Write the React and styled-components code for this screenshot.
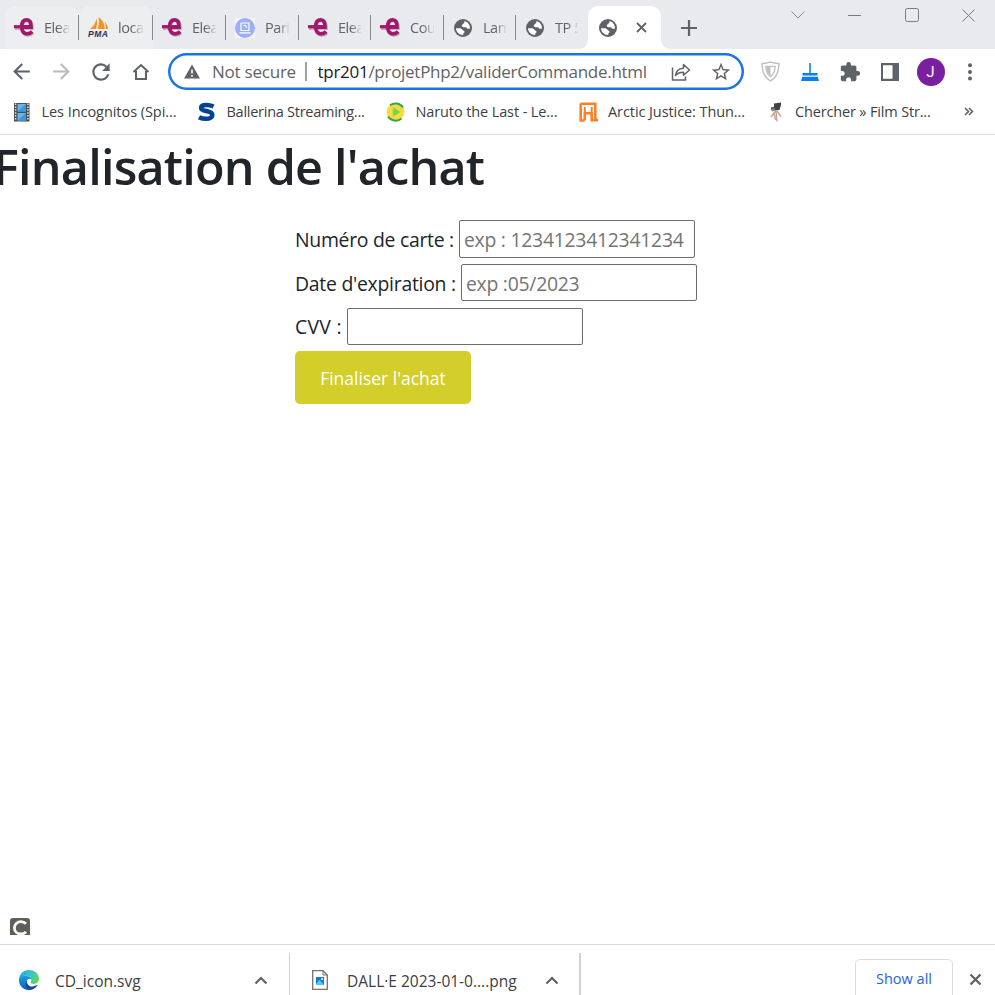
import React from "react";
import styled, { createGlobalStyle } from "styled-components";
import { MdExtension, MdStarOutline, MdRefresh, MdArrowBack, MdArrowForward } from "react-icons/md";

const GlobalStyle = createGlobalStyle`
  *, *::before, *::after { box-sizing: border-box; }
  html, body { margin: 0; padding: 0; height: 100%; overflow: hidden; }
  body { background: #fff; font-family: "Open Sans", "Noto Sans", sans-serif; }
  svg { display: block; flex: none; }
`;

const Window = styled.div`
  width: 995px;
  height: 995px;
  display: flex;
  flex-direction: column;
  overflow: hidden;
`;

/* ---------- tab strip ---------- */
const TabStrip = styled.div`
  height: 49px;
  flex: none;
  display: flex;
  background: #e8eaed;
  padding: 6px 0 0 5px;
`;
const Tab = styled.div`
  width: ${(p) => p.$width}px;
  height: 43px;
  flex: none;
  display: flex;
  align-items: center;
  padding-left: 9px;
  border-radius: 10px 10px 0 0;
  background: ${(p) => (p.$tint ? "#eceef0" : "transparent")};
`;
const TabIcon = styled.span`
  width: 21px;
  flex: none;
`;
const TabTitle = styled.span`
  flex: 1;
  min-width: 0;
  margin-left: 9px;
  white-space: nowrap;
  font-size: 14.5px;
  letter-spacing: -0.45px;
  line-height: 22px;
  color: #5f6368;
  mask-image: linear-gradient(to right, #000 55%, transparent 105%);
`;
const TabDivider = styled.span`
  width: 1px;
  height: 25px;
  margin-left: 9px;
  background: ${(p) => (p.$hidden ? "transparent" : "#85888c")};
`;
const ActiveTab = styled.div`
  position: relative;
  width: 73px;
  height: 43px;
  flex: none;
  display: flex;
  align-items: center;
  padding-left: 10px;
  gap: 18px;
  background: #fff;
  border-radius: 10px 10px 0 0;
  &::before, &::after {
    content: "";
    position: absolute;
    bottom: 0;
    width: 9px;
    height: 9px;
  }
  &::before { left: -9px; background: radial-gradient(circle at 0 0, transparent 8.5px, #fff 9px); }
  &::after { right: -9px; background: radial-gradient(circle at 100% 0, transparent 8.5px, #fff 9px); }
`;
const NewTab = styled.div`
  display: flex;
  align-items: center;
  height: 43px;
  margin-left: 20px;
`;
const WindowControls = styled.div`
  display: flex;
  margin: 0 -2px 0 auto;
  height: 18px;
`;
const WindowControl = styled.div`
  width: 57px;
  display: flex;
  align-items: center;
  justify-content: center;
`;

/* ---------- toolbar ---------- */
const Toolbar = styled.div`
  height: 46px;
  flex: none;
  display: flex;
  align-items: center;
  padding: 0 0 1px 1px;
`;
const ToolButton = styled.div`
  width: 40px;
  height: 40px;
  flex: none;
  display: flex;
  align-items: center;
  justify-content: center;
  color: ${(p) => (p.$disabled ? "#babcbe" : "#5f6368")};
`;
const AddressBar = styled.div`
  width: 576px;
  height: 37px;
  flex: none;
  margin: 0 6px 0 7px;
  display: flex;
  align-items: center;
  box-shadow: inset 0 0 0 2.5px #1a73e8;
  border-radius: 19px;
  padding-left: 16px;
  font-size: 17px;
  line-height: 24px;
  white-space: nowrap;
  color: #5f6368;
`;
const Security = styled.span`
  width: 84px;
  margin-left: 12px;
  letter-spacing: -0.23px;
`;
const AddressDivider = styled.span`
  width: 1.5px;
  height: 19px;
  margin: 0 11px 0 9px;
  background: #9aa0a6;
`;
const Url = styled.span`
  width: 343px;
  letter-spacing: -0.28px;
`;
const Host = styled.span`
  color: #202124;
`;
const Avatar = styled.div`
  width: 28px;
  height: 28px;
  margin-left: 1px;
  border-radius: 50%;
  background: #7b1fa2;
  color: #fff;
  display: flex;
  align-items: center;
  justify-content: center;
  font: 15px/28px Roboto, sans-serif;
`;

/* ---------- bookmarks ---------- */
const Bookmarks = styled.div`
  height: 40px;
  flex: none;
  display: flex;
  align-items: center;
  padding: 0 0 6px 12px;
  border-bottom: 1px solid #dadce0;
`;
const Bookmark = styled.div`
  width: ${(p) => p.$width}px;
  flex: none;
  display: flex;
  align-items: center;
  gap: 9.5px;
  font-size: 14.5px;
  line-height: 22px;
  letter-spacing: ${(p) => p.$tracking}px;
  white-space: nowrap;
  color: #3c4043;
`;

/* ---------- page ---------- */
const Page = styled.main`
  flex: 1;
  display: flex;
  flex-direction: column;
  overflow: hidden;
  color: #212529;
`;
const Heading = styled.h1`
  margin: 1px 0 0 -7px;
  font-size: 48.5px;
  font-weight: 600;
  line-height: 60px;
  letter-spacing: -0.78px;
  white-space: nowrap;
`;
const Form = styled.form`
  margin: 24px 0 0 295px;
  display: flex;
  flex-direction: column;
  align-items: flex-start;
`;
const Field = styled.label`
  display: flex;
  align-items: flex-start;
  height: 44px;
  font-size: 19.4px;
  line-height: 40px;
  white-space: nowrap;
`;
const FieldLabel = styled.span`
  width: ${(p) => p.$width}px;
  line-height: ${(p) => p.$line || 40}px;
  letter-spacing: ${(p) => p.$tracking}px;
`;
const Input = styled.input`
  width: 236px;
  height: ${(p) => p.$height || 37}px;
  padding: ${(p) => (p.$height ? 1 : 3)}px 4px 1px;
  border: 1px solid #6d6d6d;
  border-radius: 2px;
  outline: none;
  background: #fff;
  font: 19.4px/30px "Open Sans", "Noto Sans", sans-serif;
  letter-spacing: -0.27px;
  &::placeholder { color: #757575; opacity: 1; }
`;
const Submit = styled.button`
  width: 176px;
  height: 53px;
  margin-top: -1px;
  padding: 2px 0 0;
  border: 0;
  border-radius: 5px;
  background: #d3ce2a;
  color: #fff;
  font: 17.5px/27px "Open Sans", "Noto Sans", sans-serif;
  white-space: nowrap;
`;
const CornerBadge = styled.div`
  margin: auto 0 9px 10px;
`;

/* ---------- downloads ---------- */
const Downloads = styled.footer`
  height: 51px;
  flex: none;
  display: flex;
  border-top: 1px solid #dadce0;
  padding-top: 8px;
`;
const Download = styled.div`
  width: ${(p) => p.$width}px;
  height: 42px;
  flex: none;
  display: flex;
  align-items: center;
  padding: 11px ${(p) => p.$end}px 0 ${(p) => p.$inset}px;
  border-right: ${(p) => p.$edge}px solid #cfd0d2;
  color: #3c4043;
`;
const FileName = styled.span`
  flex: 1;
  padding-top: 2px;
  margin-left: ${(p) => p.$gap}px;
  font-size: 15.5px;
  line-height: 22px;
  white-space: nowrap;
`;
const ShowAll = styled.div`
  width: 98px;
  height: 42px;
  margin: 6px 0 0 auto;
  border: 1px solid #dadce0;
  border-radius: 5px;
  color: #1a66e0;
  font-size: 14.5px;
  font-weight: 500;
  line-height: 38px;
  text-align: center;
`;
const CloseDownloads = styled.div`
  width: 42px;
  padding: 20px 0 0 16px;
`;

/* ---------- icons ---------- */
const Stroke = ({ w, h = w, d, color = "#5f6368", sw = 2 }) => (
  <svg width={w} height={h} viewBox={`0 0 ${w} ${h}`} fill="none" stroke={color} strokeWidth={sw}>
    <path d={d} />
  </svg>
);
const ElearningIcon = () => (
  <svg width="21" height="21" viewBox="0 0 21 21" fill="none">
    <path d="M1 11H18C18 6 16.500 3.400 13.400 3.400C9.900 3.400 8 6.300 8 10.300C8 14.800 10.300 17.800 13.600 17.800C15.800 17.800 17.600 17 18.800 15.800" stroke="#777" strokeOpacity=".45" strokeWidth="3.800" />
    <path d="M0 9.700H7" stroke="#a3176d" strokeWidth="3.200" />
    <path d="M6 10H17C17 5 15.500 2.800 12.700 2.800C9.400 2.800 7.700 5.500 7.700 9.700C7.700 14 9.700 16.800 13 16.800C15 16.800 16.800 16 18.200 14.600" stroke="#a3176d" strokeWidth="3.800" />
  </svg>
);
const PmaIcon = () => (
  <svg width="21" height="21" viewBox="0 0 21 21">
    <path d="M2 12C6 9 7.500 6 8.500 1.500C9.500 5 9 9 8 12ZM9.500 12C11.500 7 11 4 10.500 0C15 3 17 8 16.500 12ZM17.500 12C17.800 9 17.500 7 16.500 4.500C19 7 20 10 20 12Z" fill="#f7931e" />
    <text x="0" y="19.500" textLength="20" fill="#2c2b63" fontFamily="Liberation Sans" fontSize="8.500" fontWeight="700" fontStyle="italic">PMA</text>
  </svg>
);
const PartIcon = () => (
  <svg width="20" height="20" viewBox="0 0 20 20">
    <path fill="#f6f8ff" d="M0 0h20v20H0z" />
    <circle cx="10" cy="10" r="10" fill="#9caefa" />
    <path d="M6 5h8v7.500H6zM4.500 14.800h11" fill="none" stroke="#fff" strokeWidth="1.200" />
    <path d="M8.500 7.500h2.500v2h1" fill="none" stroke="#fff" />
  </svg>
);
const Globe = () => (
  <svg width="20" height="18" viewBox="0 0 20 18">
    <circle cx="10" cy="9" r="9" fill="#5f6368" />
    <g fill="#fff">
      <path d="M11.500 2.100C14.800 3 17 5.800 17 9.300C15.800 10.400 13.600 9.800 13.300 8.300C11.300 8.300 8.900 8.700 8.900 6.600C8.900 5 11.800 5 11.500 2.100Z" />
      <path d="M3 9.300H7.300C9 9.500 9 11.200 10.600 11.700C12 12.300 11.800 13.700 10.300 14.300V16C6.200 16 3 13 3 9.300Z" />
    </g>
  </svg>
);
const HomeIcon = () => <Stroke w={18} h={18} sw={2} d="M1.500 9L9 2L16.500 9M4 8V16H14V8" />;
const WarningIcon = () => (
  <svg width="16" height="15" viewBox="0 0 16 15">
    <path d="M8 .5L16 14.500H0Z" fill="#5f6368" />
    <path d="M8 5.500v4M8 11v1.800" stroke="#fff" strokeWidth="1.600" />
  </svg>
);
const ShareIcon = () => (
  <svg width="20" height="20" viewBox="0 0 20 20" fill="none" stroke="#5f6368" strokeWidth="1.500">
    <path d="M1.500 5.500V18H14.500V14.500" />
    <path d="M4.500 13.500C5 9 7.500 6.500 12.500 6.200V2.500L18.500 8L12.500 13.300V10.300C9 10.200 6.500 11.200 4.500 13.500Z" strokeLinejoin="round" />
  </svg>
);
const ShieldIcon = () => (
  <svg width="19" height="21" viewBox="0 0 19 21" fill="none">
    <path d="M1.200 2.500C5 2.500 7.500 1.500 9.500 1C11.500 1.500 14 2.500 17.800 2.500C18 10 15.500 16.500 9.500 19.800C3.500 16.500 1 10 1.200 2.500Z" stroke="#bfc1c2" strokeWidth="1.500" />
    <path d="M4.800 5.300H14.200C14 10 12.500 13.500 9.500 15.600C6.500 13.500 5 10 4.800 5.300Z" stroke="#bfc1c2" strokeWidth="1.300" />
    <path d="M5 5.300H9.500V15.600C6.500 13.500 5.200 10 5 5.300Z" fill="#bfc1c2" />
  </svg>
);
const BroomIcon = () => (
  <svg width="18" height="18" viewBox="0 0 18 18" fill="#0a7cff">
    <path d="M8.200 0H9.800V10H16.500V12.500H1.500V10H8.200ZM1.200 13.700H16.800L18 18H0Z" />
  </svg>
);
const SidePanelIcon = () => (
  <svg width="18" height="18" viewBox="0 0 18 18">
    <path d="M0 0H18V18H0ZM2 2.300V15.700H11.500V2.300Z" fill="#5f6368" fillRule="evenodd" />
  </svg>
);
const MenuIcon = () => (
  <svg width="4" height="18" viewBox="0 0 4 18" fill="#5f6368">
    <circle cx="2" cy="2.300" r="2" /><circle cx="2" cy="8.900" r="2" /><circle cx="2" cy="15.500" r="2" />
  </svg>
);
const FilmIcon = () => (
  <svg width="20" height="20" viewBox="0 0 20 20">
    <path d="M2 1H17.500V19.500H2Z" fill="#4b4f52" />
    <path d="M5.500 2H14V9.500H5.500ZM5.500 11H14V18.500H5.500Z" fill="#62b5ef" />
    <path d="M5.500 9.500L14 2V9.500ZM5.500 18.500L14 11V18.500Z" fill="#3d96dc" />
    <path d="M3.600 1.500V19M15.900 1.500V19" stroke="#dfe3e5" strokeWidth="1.500" strokeDasharray="1.500 1.400" />
  </svg>
);
const SIcon = () => (
  <svg width="20" height="20" viewBox="0 0 20 20" fill="none">
    <path d="M16.500 4.500C14 3.300 11.500 3 9.300 3C5.800 3 4.100 4.300 4.100 6C4.100 10.300 15.300 7.700 15.300 13C15.300 15.600 12.500 16.800 9.300 16.800C6.500 16.800 4 16.300 2 15.200" stroke="#044392" strokeWidth="4.600" />
  </svg>
);
const PlayIcon = () => (
  <svg width="20" height="20" viewBox="0 0 20 20">
    <circle cx="9.500" cy="10" r="9" fill="#f5dc45" />
    <path d="M4 3.300A9 9 0 0 1 17 5.500M15.500 16.500A9 9 0 0 1 2 14.500" stroke="#39a345" strokeWidth="2" fill="none" />
    <path d="M7 5L14.500 10L7 14.500Z" fill="#73cf45" stroke="#b9dc4a" />
  </svg>
);
const HIcon = () => (
  <svg width="20" height="20" viewBox="0 0 20 20" fill="none" stroke="#f98128">
    <path d="M5.500 18.500H1.700V3Q1.700 1.800 2.900 1.800H16.300V16Q16.300 18.300 19 18.300H12.700V11.300H5.800V18.500" strokeWidth="2.600" />
    <path d="M5.800 5V10M12.700 5V10" strokeWidth="2" />
  </svg>
);
const CameraIcon = () => (
  <svg width="20" height="20" viewBox="0 0 20 20">
    <path d="M8 1.500L15 0.500V3L13.500 8L9 8.500L5 8V5.500L8 5Z" fill="#414345" />
    <path d="M5 7L8.500 6L9.500 8.500L6 9.500Z" fill="#76899b" />
    <path d="M9.500 9L5 15M10 9L11 19.500M11 9L15 14.500M8 11L9.500 18" stroke="#c9a58d" strokeWidth="1.400" fill="none" />
  </svg>
);
const CIcon = () => (
  <svg width="20" height="17" viewBox="0 0 20 17">
    <path d="M3 0H17Q20 0 20 3V17H0V3Q0 0 3 0Z" fill="#5e5e5e" />
    <path d="M16 5.800C14.500 4.200 12.800 3.700 11 3.700C7.300 3.700 4.400 6.500 4.400 10C4.400 13.500 7.300 16 11 16C13 16 14.800 15.300 16 13.900" fill="none" stroke="#fdf9e8" strokeWidth="2.800" />
  </svg>
);
const EdgeIcon = () => (
  <svg width="20" height="20" viewBox="0 0 20 20">
    <defs>
      <linearGradient id="edgeTop" x1="0" y1=".3" x2="1" y2=".6">
        <stop offset="0" stopColor="#1fa5e0" /><stop offset=".55" stopColor="#35c7cb" /><stop offset="1" stopColor="#63d94a" />
      </linearGradient>
      <linearGradient id="edgeSide" x1="0" y1="0" x2="0" y2="1">
        <stop offset="0" stopColor="#1a9ce0" /><stop offset="1" stopColor="#0b62c0" />
      </linearGradient>
    </defs>
    <path d="M0 9C.5 4 4.500 0 10 0C16 0 20 4.200 20 8.800C20 12 17.500 14 14.800 14C12.500 14 11.200 13 11.800 12C13 10 12 7 8.500 6C5 5 1.500 6.500 0 9Z" fill="url(#edgeTop)" />
    <path d="M0 10C0 7 3.500 5.600 7 5.800C10 6 12 7.500 12.300 9.500C10.500 8 7.800 9 7.800 12C7.800 15.500 11 18 15 17.200C13 19 11.500 20 9.500 20C4 20 0 15.500 0 10Z" fill="url(#edgeSide)" />
    <path d="M7.900 10.800C7.400 15 11 17.300 14.500 16.300C16.500 15.700 17.800 15 18.600 15C16.800 18.500 13.500 20 10.500 20C6.500 19 5.500 13.500 7.900 10.800Z" fill="#134b98" />
  </svg>
);
const ImageFileIcon = () => (
  <svg width="16" height="20" viewBox="0 0 16 20">
    <path d="M.7.7H11L15.300 5V19.300H.7Z" fill="#fff" stroke="#77736f" strokeWidth="1.300" />
    <path d="M11 .7V5H15.300" fill="none" stroke="#77736f" />
    <path d="M4 7H12V15H4Z" fill="#167bd8" />
    <path d="M4 14L7.500 9.800L12 15H4Z" fill="#52c9f5" />
    <circle cx="10" cy="9" r="1" fill="#fff" />
  </svg>
);
const Chevron = () => <Stroke w={14} h={10} sw={2.200} d="M1.500 8.500L7 3L12.500 8.500" />;

const tabs = [
  { icon: <ElearningIcon />, title: "Elea", width: 74, tint: true },
  { icon: <PmaIcon />, title: "loca", width: 74, tint: true },
  { icon: <ElearningIcon />, title: "Elea", width: 73 },
  { icon: <PartIcon />, title: "Pari", width: 73 },
  { icon: <ElearningIcon />, title: "Elea", width: 72 },
  { icon: <ElearningIcon />, title: "Cou", width: 73 },
  { icon: <Globe />, title: "Lan", width: 72 },
  { icon: <Globe />, title: "TP 5", width: 72 },
];
const bookmarks = [
  { icon: <FilmIcon />, title: "Les Incognitos (Spi...", width: 185, tracking: -0.05 },
  { icon: <SIcon />, title: "Ballerina Streaming...", width: 189, tracking: -0.26 },
  { icon: <PlayIcon />, title: "Naruto the Last - Le...", width: 192.5, tracking: -0.11 },
  { icon: <HIcon />, title: "Arctic Justice: Thun...", width: 187, tracking: -0.08 },
  { icon: <CameraIcon />, title: "Chercher » Film Str...", width: 198.5, tracking: -0.16 },
];

export default function App() {
  return (
    <Window>
      <GlobalStyle />
      <TabStrip>
        {tabs.map((t, i) => (
          <Tab key={i} $width={t.width} $tint={t.tint}>
            <TabIcon>{t.icon}</TabIcon>
            <TabTitle>{t.title}</TabTitle>
            <TabDivider $hidden={i === tabs.length - 1} />
          </Tab>
        ))}
        <ActiveTab>
          <Globe />
          <Stroke w={11} sw={1.800} d="M1 1L10 10M10 1L1 10" />
        </ActiveTab>
        <NewTab><Stroke w={16} sw={2.200} d="M8 0V16M0 8H16" /></NewTab>
        <WindowControls>
          <WindowControl><Stroke w={14} h={8} sw={1} color="#8b8d90" d="M.5 .5L7 7L13.500 .5" /></WindowControl>
          <WindowControl><Stroke w={13} h={1} sw={1} color="#77797c" d="M0 .5H13" /></WindowControl>
          <WindowControl><Stroke w={14} sw={1} color="#77797c" d="M2.500 .5H11.500Q13.500 .5 13.500 2.500V11.500Q13.500 13.500 11.500 13.500H2.500Q.5 13.500 .5 11.500V2.500Q.5 .5 2.500 .5Z" /></WindowControl>
          <WindowControl><Stroke w={13} sw={1} color="#77797c" d="M.5 .5L12.500 12.500M12.500 .5L.5 12.500" /></WindowControl>
        </WindowControls>
      </TabStrip>

      <Toolbar>
        <ToolButton><MdArrowBack size={25} /></ToolButton>
        <ToolButton $disabled><MdArrowForward size={25} /></ToolButton>
        <ToolButton><MdRefresh size={26} /></ToolButton>
        <ToolButton><HomeIcon /></ToolButton>
        <AddressBar>
          <WarningIcon />
          <Security>Not secure</Security>
          <AddressDivider />
          <Url><Host>tpr201</Host>/projetPhp2/validerCommande.html</Url>
          <ToolButton><ShareIcon /></ToolButton>
          <ToolButton><MdStarOutline size={22} /></ToolButton>
        </AddressBar>
        <ToolButton><ShieldIcon /></ToolButton>
        <ToolButton><BroomIcon /></ToolButton>
        <ToolButton><MdExtension size={22} /></ToolButton>
        <ToolButton><SidePanelIcon /></ToolButton>
        <ToolButton><Avatar>J</Avatar></ToolButton>
        <ToolButton><MenuIcon /></ToolButton>
      </Toolbar>

      <Bookmarks>
        {bookmarks.map((b) => (
          <Bookmark key={b.title} $width={b.width} $tracking={b.tracking}>
            {b.icon}
            <span>{b.title}</span>
          </Bookmark>
        ))}
        <Stroke w={10} h={9} sw={1.600} d="M1 1L4.500 4.500L1 8M5 1L8.500 4.500L5 8" />
      </Bookmarks>

      <Page>
        <Heading>Finalisation de l'achat</Heading>
        <Form>
          <Field>
            <FieldLabel $width={164} $tracking={-0.28}>Numéro de carte :</FieldLabel>
            <Input $height={38} placeholder="exp : 1234123412341234" />
          </Field>
          <Field>
            <FieldLabel $width={166} $tracking={-0.26}>Date d'expiration :</FieldLabel>
            <Input placeholder="exp :05/2023" />
          </Field>
          <Field>
            <FieldLabel $width={52} $tracking={0.3} $line={38}>CVV :</FieldLabel>
            <Input />
          </Field>
          <Submit type="button">Finaliser l'achat</Submit>
        </Form>
        <CornerBadge><CIcon /></CornerBadge>
      </Page>

      <Downloads>
        <Download $width={290} $inset={19} $end={21} $edge={1}>
          <EdgeIcon />
          <FileName $gap={16}>CD_icon.svg</FileName>
          <Chevron />
        </Download>
        <Download $width={291} $inset={22} $end={20} $edge={2}>
          <ImageFileIcon />
          <FileName $gap={19}>DALL·E 2023-01-0....png</FileName>
          <Chevron />
        </Download>
        <ShowAll>Show all</ShowAll>
        <CloseDownloads><Stroke w={13} sw={2.300} d="M1.500 1.500L11.500 11.500M11.500 1.500L1.500 11.500" /></CloseDownloads>
      </Downloads>
    </Window>
  );
}
